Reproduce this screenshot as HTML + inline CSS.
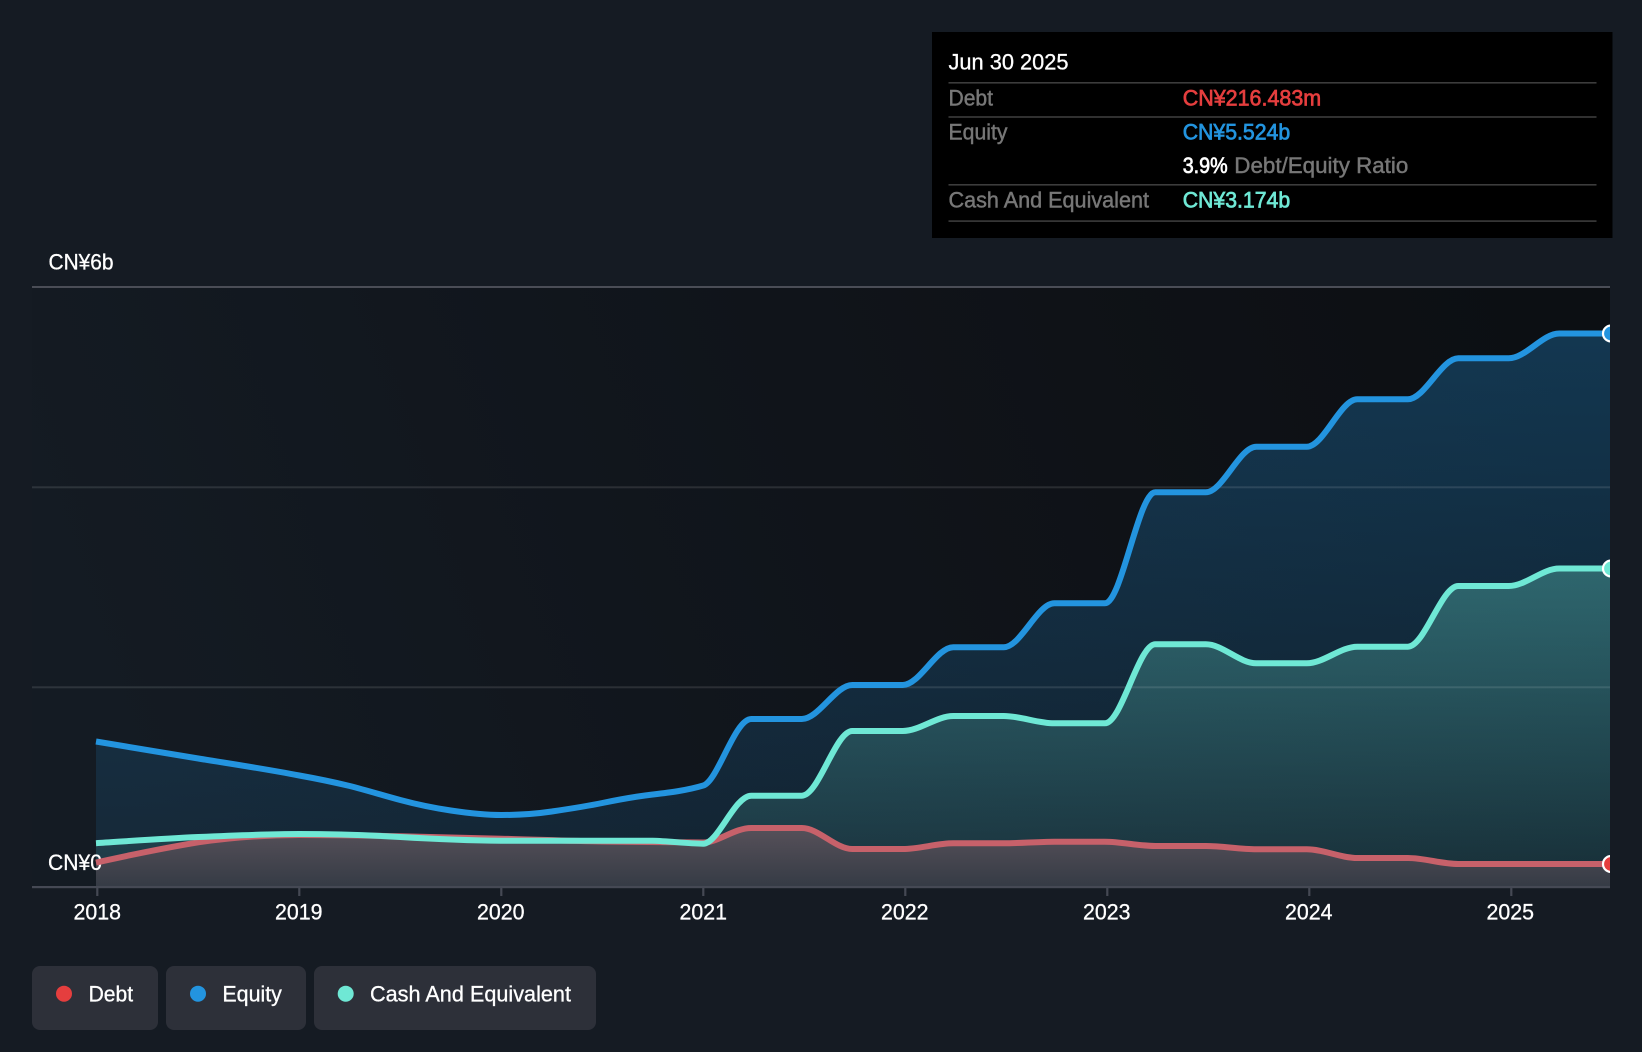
<!DOCTYPE html>
<html lang="en">
<head>
<meta charset="utf-8">
<title>Debt to Equity History</title>
<style>
html,body{margin:0;padding:0;background:#151b23;width:1642px;height:1052px;overflow:hidden}
svg{display:block}
text{font-family:"Liberation Sans",sans-serif;font-size:22px}
.w{fill:#fff;stroke:#fff;stroke-width:.3px}
.g{fill:#777;stroke:#777;stroke-width:.45px}
.m{stroke-width:.7px}
</style>
</head>
<body>
<svg xmlns="http://www.w3.org/2000/svg" width="1642" height="1052" viewBox="0 0 1642 1052">
<defs>
<linearGradient id="bg" gradientUnits="userSpaceOnUse" x1="1520" y1="290" x2="120" y2="760">
<stop offset="0" stop-color="#0c0f13"/>
<stop offset=".3" stop-color="#0f1217"/>
<stop offset=".65" stop-color="#11161d"/>
<stop offset="1" stop-color="#141b23"/>
</linearGradient>
<linearGradient id="eq" gradientUnits="userSpaceOnUse" x1="0" y1="287" x2="0" y2="887">
<stop offset="0" stop-color="#2394df" stop-opacity=".32"/>
<stop offset="1" stop-color="#2394df" stop-opacity=".1"/>
</linearGradient>
<linearGradient id="ca" gradientUnits="userSpaceOnUse" x1="0" y1="540" x2="0" y2="887">
<stop offset="0" stop-color="#6fe8d5" stop-opacity=".33"/>
<stop offset="1" stop-color="#6fe8d5" stop-opacity=".08"/>
</linearGradient>
<linearGradient id="de" gradientUnits="userSpaceOnUse" x1="0" y1="830" x2="0" y2="887">
<stop offset="0" stop-color="#565059"/>
<stop offset="1" stop-color="#353b45"/>
</linearGradient>
<clipPath id="plot"><rect x="32" y="280" width="1578" height="608"/></clipPath>
</defs>

<rect width="1642" height="1052" fill="#151b23"/>
<rect x="32" y="287" width="1578" height="600" fill="url(#bg)"/>

<g clip-path="url(#plot)">
<!-- equity fill -->
<path fill="url(#eq)" d="M96 741.5C131 747 165 753 198.3 758.5C232 764 266 769 299.3 775.5C316 778.5 333 782 349.8 786C366.6 790.3 383.5 795.5 400.3 800C417 804.5 434 808 450.8 810.5C467.6 813 484.5 815 501.3 815C518 815 535 814 551.8 811.5C568.6 809 585.5 806.5 602.3 803C619 799.5 636 796.5 652.8 794.5C669.6 792.5 686.5 790.5 703.3 785.5C718 781 734.5 719 751.3 719L801.8 719C818.6 719 835.5 685 852.3 685L902.8 685C919.6 685 936.5 647.2 953.3 647.2L1003.8 647.2C1020.6 647.2 1037.5 603.3 1054.3 603.3L1104.8 603.3C1121.6 603.3 1138.5 492.3 1155.3 492.3L1205.8 492.3C1222.6 492.3 1239.5 446.7 1256.3 446.7L1306.8 446.7C1323.6 446.7 1340.5 399.3 1357.3 399.3L1407.8 399.3C1424.6 399.3 1441.5 358.3 1458.3 358.3L1508.8 358.3C1525.6 358.3 1542.5 333.5 1559.3 333.5L1612.3 333.5L1612.3 887L96 887Z"/>
<!-- cash fill -->
<path fill="url(#ca)" d="M96 843.2C130 841 164 838.5 198.3 837C232 835.5 266 834 299.3 834C333 834 367 835 400.3 837C434 839 467 840.5 501.3 840.7L652.8 840.7C669.6 841 686.5 843.7 703.3 843.7C718 843.7 734.5 795.7 751.3 795.7L801.8 795.7C818.6 795.7 835.5 731 852.3 731L902.8 731C919.6 731 936.5 716 953.3 716L1003.8 716C1020.6 716 1037.5 723.3 1054.3 723.3L1104.8 723.3C1121.6 723.3 1138.5 644.3 1155.3 644.3L1205.8 644.3C1222.6 644.3 1239.5 663.3 1256.3 663.3L1306.8 663.3C1323.6 663.3 1340.5 646.7 1357.3 646.7L1407.8 646.7C1424.6 646.7 1441.5 586 1458.3 586L1508.8 586C1525.6 586 1542.5 568.5 1559.3 568.5L1612.3 568.5L1612.3 887L96 887Z"/>
<!-- debt fill -->
<path fill="url(#de)" d="M96 862.6C130 855 164 848 198.3 842.3C232 837.5 266 835 299.3 835C333 835 367 835.5 400.3 836.3C434 837 467 838 501.3 838.7C535 839.5 568 841 602.3 841.5L703.3 842.5C718 842.5 734.5 828 751.3 828L801.8 828C818.6 828 835.5 849 852.3 849L902.8 849C919.6 849 936.5 843.3 953.3 843.3L1003.8 843.3C1020.6 843.3 1037.5 841.7 1054.3 841.7L1104.8 841.7C1121.6 841.7 1138.5 846 1155.3 846L1205.8 846C1222.6 846 1239.5 849.3 1256.3 849.3L1306.8 849.3C1323.6 849.3 1340.5 858 1357.3 858L1407.8 858C1424.6 858 1441.5 864 1458.3 864L1612.3 864L1612.3 887L96 887Z"/>
</g>

<!-- grid -->
<rect x="32" y="286" width="1578" height="2" fill="#4a4d56"/>
<rect x="32" y="486.3" width="1578" height="2" fill="#fff" fill-opacity=".11"/>
<rect x="32" y="686.3" width="1578" height="2" fill="#fff" fill-opacity=".11"/>
<rect x="32" y="886" width="1578" height="2.2" fill="#454954"/>
<g fill="#454954">
<rect x="96.2" y="887" width="2.2" height="9"/>
<rect x="298.2" y="887" width="2.2" height="9"/>
<rect x="500.2" y="887" width="2.2" height="9"/>
<rect x="702.2" y="887" width="2.2" height="9"/>
<rect x="904.2" y="887" width="2.2" height="9"/>
<rect x="1106.2" y="887" width="2.2" height="9"/>
<rect x="1308.2" y="887" width="2.2" height="9"/>
<rect x="1510.2" y="887" width="2.2" height="9"/>
</g>

<!-- axis labels -->
<text class="w" x="48.5" y="269.5" textLength="65" lengthAdjust="spacingAndGlyphs">CN¥6b</text>
<text class="w" x="48" y="870" textLength="54" lengthAdjust="spacingAndGlyphs">CN¥0</text>
<text class="w" x="73.5" y="919.5" textLength="47.5" lengthAdjust="spacingAndGlyphs">2018</text>
<text class="w" x="275" y="919.5" textLength="47.5" lengthAdjust="spacingAndGlyphs">2019</text>
<text class="w" x="477" y="919.5" textLength="47.5" lengthAdjust="spacingAndGlyphs">2020</text>
<text class="w" x="679.5" y="919.5" textLength="47.5" lengthAdjust="spacingAndGlyphs">2021</text>
<text class="w" x="881" y="919.5" textLength="47.5" lengthAdjust="spacingAndGlyphs">2022</text>
<text class="w" x="1083" y="919.5" textLength="47.5" lengthAdjust="spacingAndGlyphs">2023</text>
<text class="w" x="1285" y="919.5" textLength="47.5" lengthAdjust="spacingAndGlyphs">2024</text>
<text class="w" x="1486.5" y="919.5" textLength="47.5" lengthAdjust="spacingAndGlyphs">2025</text>

<g clip-path="url(#plot)" fill="none" stroke-width="6">
<path stroke="#2394df" d="M96 741.5C131 747 165 753 198.3 758.5C232 764 266 769 299.3 775.5C316 778.5 333 782 349.8 786C366.6 790.3 383.5 795.5 400.3 800C417 804.5 434 808 450.8 810.5C467.6 813 484.5 815 501.3 815C518 815 535 814 551.8 811.5C568.6 809 585.5 806.5 602.3 803C619 799.5 636 796.5 652.8 794.5C669.6 792.5 686.5 790.5 703.3 785.5C718 781 734.5 719 751.3 719L801.8 719C818.6 719 835.5 685 852.3 685L902.8 685C919.6 685 936.5 647.2 953.3 647.2L1003.8 647.2C1020.6 647.2 1037.5 603.3 1054.3 603.3L1104.8 603.3C1121.6 603.3 1138.5 492.3 1155.3 492.3L1205.8 492.3C1222.6 492.3 1239.5 446.7 1256.3 446.7L1306.8 446.7C1323.6 446.7 1340.5 399.3 1357.3 399.3L1407.8 399.3C1424.6 399.3 1441.5 358.3 1458.3 358.3L1508.8 358.3C1525.6 358.3 1542.5 333.5 1559.3 333.5L1612.3 333.5"/>
<path stroke="#c7616a" d="M96 862.6C130 855 164 848 198.3 842.3C232 837.5 266 835 299.3 835C333 835 367 835.5 400.3 836.3C434 837 467 838 501.3 838.7C535 839.5 568 841 602.3 841.5L703.3 842.5C718 842.5 734.5 828 751.3 828L801.8 828C818.6 828 835.5 849 852.3 849L902.8 849C919.6 849 936.5 843.3 953.3 843.3L1003.8 843.3C1020.6 843.3 1037.5 841.7 1054.3 841.7L1104.8 841.7C1121.6 841.7 1138.5 846 1155.3 846L1205.8 846C1222.6 846 1239.5 849.3 1256.3 849.3L1306.8 849.3C1323.6 849.3 1340.5 858 1357.3 858L1407.8 858C1424.6 858 1441.5 864 1458.3 864L1612.3 864"/>
<path stroke="#6fe8d5" d="M96 843.2C130 841 164 838.5 198.3 837C232 835.5 266 834 299.3 834C333 834 367 835 400.3 837C434 839 467 840.5 501.3 840.7L652.8 840.7C669.6 841 686.5 843.7 703.3 843.7C718 843.7 734.5 795.7 751.3 795.7L801.8 795.7C818.6 795.7 835.5 731 852.3 731L902.8 731C919.6 731 936.5 716 953.3 716L1003.8 716C1020.6 716 1037.5 723.3 1054.3 723.3L1104.8 723.3C1121.6 723.3 1138.5 644.3 1155.3 644.3L1205.8 644.3C1222.6 644.3 1239.5 663.3 1256.3 663.3L1306.8 663.3C1323.6 663.3 1340.5 646.7 1357.3 646.7L1407.8 646.7C1424.6 646.7 1441.5 586 1458.3 586L1508.8 586C1525.6 586 1542.5 568.5 1559.3 568.5L1612.3 568.5"/>
</g>
<g clip-path="url(#plot)" stroke="#fff" stroke-width="2.2">
<circle cx="1611" cy="333.5" r="8" fill="#2394df"/>
<circle cx="1611" cy="568.5" r="8" fill="#6fe8d5"/>
<circle cx="1611" cy="864" r="8" fill="#e53e3e"/>
</g>

<!-- tooltip -->
<rect x="932" y="32" width="680.5" height="206" fill="#000"/>
<text class="w" x="948.5" y="69.5" textLength="120" lengthAdjust="spacingAndGlyphs">Jun 30 2025</text>
<g fill="#3c3c3c">
<rect x="948.5" y="82" width="648" height="1.6"/>
<rect x="948.5" y="116.2" width="648" height="1.6"/>
<rect x="948.5" y="184" width="648" height="1.6"/>
<rect x="948.5" y="220.3" width="648" height="1.6"/>
</g>
<text class="g" x="948.5" y="105.5" textLength="44.5" lengthAdjust="spacingAndGlyphs">Debt</text>
<text class="m" x="1182.7" y="105.5" textLength="138.5" lengthAdjust="spacingAndGlyphs" fill="#e53e3e" stroke="#e53e3e">CN¥216.483m</text>
<text class="g" x="948.5" y="139.3" textLength="59" lengthAdjust="spacingAndGlyphs">Equity</text>
<text class="m" x="1182.7" y="139.3" textLength="107.5" lengthAdjust="spacingAndGlyphs" fill="#2394df" stroke="#2394df">CN¥5.524b</text>
<text class="m" x="1182.7" y="173" textLength="45" lengthAdjust="spacingAndGlyphs" fill="#fff" stroke="#fff">3.9%</text>
<text class="g" x="1234.3" y="173" textLength="174" lengthAdjust="spacingAndGlyphs">Debt/Equity Ratio</text>
<text class="g" x="948.5" y="207.5" textLength="200.5" lengthAdjust="spacingAndGlyphs">Cash And Equivalent</text>
<text class="m" x="1182.7" y="207.5" textLength="107.5" lengthAdjust="spacingAndGlyphs" fill="#6fe8d5" stroke="#6fe8d5">CN¥3.174b</text>

<!-- legend -->
<rect x="32" y="966" width="126" height="64" rx="8" fill="#2d3039"/>
<rect x="166" y="966" width="140" height="64" rx="8" fill="#2d3039"/>
<rect x="314" y="966" width="282" height="64" rx="8" fill="#2d3039"/>
<circle cx="64" cy="993.7" r="8" fill="#e53e3e"/>
<circle cx="198" cy="993.7" r="8" fill="#2394df"/>
<circle cx="345.7" cy="993.7" r="8" fill="#6fe8d5"/>
<text class="w" x="88.6" y="1001.5" textLength="44.5" lengthAdjust="spacingAndGlyphs">Debt</text>
<text class="w" x="222.4" y="1001.5" textLength="59.5" lengthAdjust="spacingAndGlyphs">Equity</text>
<text class="w" x="370" y="1001.5" textLength="201" lengthAdjust="spacingAndGlyphs">Cash And Equivalent</text>
</svg>
</body>
</html>
